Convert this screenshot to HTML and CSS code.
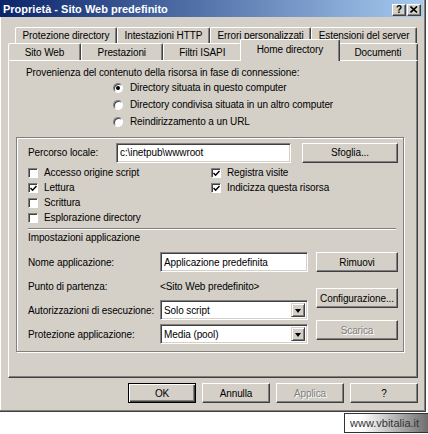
FILE: index.html
```html
<!DOCTYPE html>
<html lang="it">
<head>
  <meta charset="UTF-8">
  <title>Proprietà - Sito Web predefinito</title>
  <link rel="stylesheet" href="styles.css">
</head>
<body>
  <div class="dialog">
    <div class="titlebar">
      <span class="title">Proprietà - Sito Web predefinito</span>
      <div class="caption-btns">
        <span class="cbtn">?</span>
        <span class="cbtn">
          <svg width="8" height="7" viewBox="0 0 8 7"><path d="M0.5 0.5 L7 6.5 M7 0.5 L0.5 6.5" stroke="#000" stroke-width="1.6"/></svg>
        </span>
      </div>
    </div>

    <div class="tabs">
      <div class="tabrow back">
        <div class="tab">Protezione directory</div>
        <div class="tab">Intestazioni HTTP</div>
        <div class="tab">Errori personalizzati</div>
        <div class="tab">Estensioni del server</div>
      </div>
      <div class="tabrow front">
        <div class="tab">Sito Web</div>
        <div class="tab">Prestazioni</div>
        <div class="tab">Filtri ISAPI</div>
        <div class="tab active">Home directory</div>
        <div class="tab">Documenti</div>
      </div>
    </div>

    <div class="panel">
      <p class="intro">Provenienza del contenuto della risorsa in fase di connessione:</p>
      <div class="radio"><span class="dot on"></span>Directory situata in questo computer</div>
      <div class="radio"><span class="dot"></span>Directory condivisa situata in un altro computer</div>
      <div class="radio"><span class="dot"></span>Reindirizzamento a un URL</div>

      <div class="group">
        <div class="path-row">
          <span class="path-label">Percorso locale:</span>
          <span class="field path">c:\inetpub\wwwroot</span>
          <span class="btn browse">Sfoglia...</span>
        </div>

        <div class="checks">
          <div class="col left">
            <div class="check"><span class="box"></span>Accesso origine script</div>
            <div class="check"><span class="box"><svg width="7" height="7" viewBox="0 0 7 7"><path d="M0.5 3 L2.6 5.2 L6.5 1" fill="none" stroke="#000" stroke-width="1.5"/></svg></span>Lettura</div>
            <div class="check"><span class="box"></span>Scrittura</div>
            <div class="check"><span class="box"></span>Esplorazione directory</div>
          </div>
          <div class="col">
            <div class="check"><span class="box"><svg width="7" height="7" viewBox="0 0 7 7"><path d="M0.5 3 L2.6 5.2 L6.5 1" fill="none" stroke="#000" stroke-width="1.5"/></svg></span>Registra visite</div>
            <div class="check"><span class="box"><svg width="7" height="7" viewBox="0 0 7 7"><path d="M0.5 3 L2.6 5.2 L6.5 1" fill="none" stroke="#000" stroke-width="1.5"/></svg></span>Indicizza questa risorsa</div>
          </div>
        </div>

        <div class="sep"></div>
        <div class="app-title">Impostazioni applicazione</div>

        <div class="app-grid">
          <span class="lbl">Nome applicazione:</span>
          <span class="field">Applicazione predefinita</span>
          <span class="btn side">Rimuovi</span>

          <span class="lbl">Punto di partenza:</span>
          <span class="lbl value">&lt;Sito Web predefinito&gt;</span>
          <span class="btn side config">Configurazione...</span>

          <span class="lbl">Autorizzazioni di esecuzione:</span>
          <span class="field select">Solo script<span class="arrow"></span></span>

          <span class="lbl">Protezione applicazione:</span>
          <span class="field select">Media (pool)<span class="arrow"></span></span>
          <span class="btn side disabled unload">Scarica</span>
        </div>
      </div>
    </div>

    <div class="buttons">
      <span class="btn default">OK</span>
      <span class="btn">Annulla</span>
      <span class="btn disabled">Applica</span>
      <span class="btn">?</span>
    </div>
  </div>

  <div class="watermark">www.vbitalia.it</div>
</body>
</html>
```

FILE: styles.css
```css
* {
  box-sizing: border-box;
}

body {
  margin: 0;
  background: #fff;
  font-family: "Liberation Sans", Arial, sans-serif;
  font-size: 10px;
  letter-spacing: -0.1px;
  color: #000;
}

.dialog {
  width: 426px;
  height: 412px;
  background: #d4d0c8;
  border-right: 1px solid #404040;
  border-bottom: 1px solid #404040;
  box-shadow: inset -1px -1px #808080, inset 1px 0 #fff;
  display: flex;
  flex-direction: column;
}

/* title bar */
.titlebar {
  height: 17px;
  margin-right: 2px;
  padding: 0 2px 0 3px;
  background: linear-gradient(to right, #0a246a, #a6caf0);
  display: flex;
  align-items: center;
  justify-content: space-between;
}

.title {
  color: #fff;
  font-weight: bold;
  font-size: 11px;
  letter-spacing: 0;
}

.caption-btns {
  display: flex;
  gap: 1px;
  margin-top: 2px;
}

.cbtn {
  width: 14px;
  height: 12px;
  background: #d4d0c8;
  border: 1px solid;
  border-color: #fff #404040 #404040 #fff;
  box-shadow: inset -1px -1px #808080;
  display: flex;
  align-items: center;
  justify-content: center;
  font-weight: bold;
  font-size: 10px;
  line-height: 1;
}

/* tabs */
.tabs {
  padding-top: 10px;
}

.tabrow {
  display: flex;
}

.tabrow.back {
  margin-left: 15px;
  width: 402px;
  height: 16px;
}

.tabrow.front {
  margin-left: 8px;
  width: 410px;
  height: 17px;
}

.tab {
  flex: 1 1 auto;
  display: flex;
  align-items: center;
  justify-content: center;
  padding: 0 4px;
  border: 1px solid;
  border-bottom: none;
  border-color: #fff #404040 transparent #fff;
  border-radius: 2px 2px 0 0;
  box-shadow: inset -1px 0 #808080;
  white-space: nowrap;
}

.tab.active {
  margin: -4px -2px -1px;
  padding-bottom: 2px;
  background: #d4d0c8;
  position: relative;
  z-index: 2;
}

/* panel */
.panel {
  margin-left: 8px;
  width: 410px;
  height: 318px;
  border: 1px solid;
  border-color: #fff #404040 #404040 #fff;
  box-shadow: inset -1px -1px #808080;
  padding-top: 6px;
}

.intro {
  margin: 0 0 0 17px;
  line-height: 12px;
}

.radio {
  height: 17px;
  margin-left: 104px;
  display: flex;
  align-items: center;
  gap: 7px;
}

.dot {
  width: 10px;
  height: 10px;
  border-radius: 50%;
  background: #fff;
  border: 1px solid;
  border-color: #808080 #fff #fff #808080;
  box-shadow: inset 1px 1px #404040;
  position: relative;
}

.dot.on::after {
  content: "";
  position: absolute;
  left: 2px;
  top: 2px;
  width: 4px;
  height: 4px;
  border-radius: 50%;
  background: #000;
}

.group {
  margin: 7px 0 0 7px;
  width: 388px;
  height: 215px;
  border: 1px solid #808080;
  box-shadow: inset 1px 1px #fff, 1px 1px #fff;
  padding: 4px 0 0 11px;
}

.path-row {
  height: 21px;
  display: flex;
  align-items: center;
}

.path-label {
  width: 88px;
}

.field {
  height: 20px;
  background: #fff;
  border: 1px solid;
  border-color: #808080 #fff #fff #808080;
  box-shadow: inset 1px 1px #404040, inset -1px -1px #d4d0c8;
  padding-left: 3px;
  display: flex;
  align-items: center;
  white-space: nowrap;
}

.field.path {
  width: 175px;
}

.btn {
  height: 20px;
  display: flex;
  align-items: center;
  justify-content: center;
  background: #d4d0c8;
  border: 1px solid;
  border-color: #fff #404040 #404040 #fff;
  box-shadow: inset -1px -1px #808080;
  white-space: nowrap;
}

.btn.browse {
  width: 96px;
  margin-left: 11px;
}

.btn.disabled {
  color: #808080;
  text-shadow: 1px 1px #fff;
}

.btn.default {
  border-color: #000;
  box-shadow: inset 1px 1px #fff, inset -1px -1px #404040, inset -2px -2px #808080;
}

/* checkboxes */
.checks {
  margin-top: 2px;
  display: flex;
}

.col.left {
  width: 183px;
}

.check {
  height: 15px;
  display: flex;
  align-items: center;
  gap: 6px;
}

.box {
  width: 10px;
  height: 10px;
  background: #fff;
  border: 1px solid;
  border-color: #808080 #fff #fff #808080;
  box-shadow: inset 1px 1px #404040;
  display: flex;
  align-items: center;
  justify-content: center;
  padding: 1px 0 0 1px;
}

.box svg {
  display: block;
}

.sep {
  margin: 3px 7px 0 0;
  height: 2px;
  border-top: 1px solid #808080;
  border-bottom: 1px solid #fff;
}

.app-title {
  margin-top: 2px;
  line-height: 12px;
}

/* application settings */
.app-grid {
  margin-top: 8px;
  display: grid;
  grid-template-columns: 132px 148px 90px;
  grid-template-rows: repeat(4, 20px);
  row-gap: 4px;
}

.lbl {
  align-self: center;
  white-space: nowrap;
}

.btn.side {
  width: 82px;
  justify-self: end;
}

.btn.config {
  grid-column: 3;
  grid-row: 2 / span 2;
  align-self: center;
}

.btn.unload {
  grid-column: 3;
  grid-row: 4;
  margin-top: -4px;
}

.field.select {
  position: relative;
}

.arrow {
  position: absolute;
  right: 2px;
  top: 2px;
  width: 14px;
  height: 14px;
  background: #d4d0c8;
  border: 1px solid;
  border-color: #d4d0c8 #404040 #404040 #d4d0c8;
  box-shadow: inset 1px 1px #fff, inset -1px -1px #808080;
}

.arrow::after {
  content: "";
  position: absolute;
  left: 3px;
  top: 5px;
  border-left: 3.5px solid transparent;
  border-right: 3.5px solid transparent;
  border-top: 4px solid #000;
}

/* bottom buttons */
.buttons {
  display: flex;
  justify-content: flex-end;
  gap: 6px;
  margin: 5px 7px 0 0;
}

.buttons .btn {
  width: 68px;
}

.watermark {
  margin: 1px 0 0 344px;
  width: 84px;
  height: 20px;
  border: 1px solid #333;
  border-right: none;
  background: linear-gradient(to right, #fff 20%, #6e6e6e);
  color: #333;
  font-size: 11px;
  letter-spacing: 0;
  display: flex;
  align-items: center;
  padding-left: 5px;
}
```
